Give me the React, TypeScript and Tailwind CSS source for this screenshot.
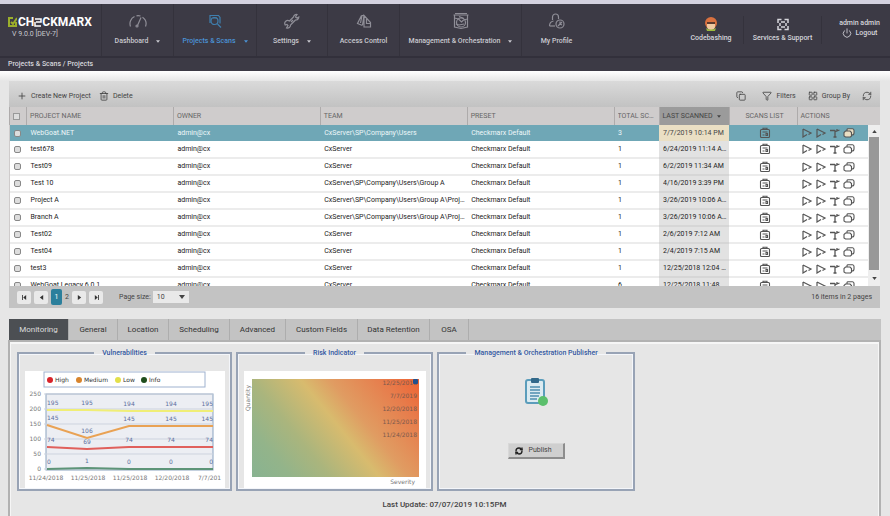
import { useState } from "react";
import type { ReactNode } from "react";
import { Copy, Filter, LayoutGrid, Plus, Power, RefreshCw, Trash2 } from "lucide-react";

interface Project {
  name: string;
  team: string;
  scans: number;
  scanned: string;
}

const projects: Project[] = [
  { name: "WebGoat.NET", team: "CxServer\\SP\\Company\\Users", scans: 3, scanned: "7/7/2019 10:14 PM" },
  { name: "test678", team: "CxServer", scans: 1, scanned: "6/24/2019 11:14 AM" },
  { name: "Test09", team: "CxServer", scans: 1, scanned: "6/2/2019 11:34 AM" },
  { name: "Test 10", team: "CxServer\\SP\\Company\\Users\\Group A", scans: 1, scanned: "4/16/2019 3:39 PM" },
  { name: "Project A", team: "CxServer\\SP\\Company\\Users\\Group A\\Project A", scans: 1, scanned: "3/26/2019 10:06 AM" },
  { name: "Branch A", team: "CxServer\\SP\\Company\\Users\\Group A\\Project A", scans: 1, scanned: "3/26/2019 10:06 AM" },
  { name: "Test02", team: "CxServer", scans: 1, scanned: "2/6/2019 7:12 AM" },
  { name: "Test04", team: "CxServer", scans: 1, scanned: "2/4/2019 7:15 AM" },
  { name: "test3", team: "CxServer", scans: 1, scanned: "12/25/2018 12:04 PM" },
  { name: "WebGoat Legacy 6.0.1", team: "CxServer", scans: 6, scanned: "12/25/2018 11:48 AM" },
];

const tabs = [
  { label: "Monitoring", width: "w-[60px]" },
  { label: "General", width: "w-[49px]" },
  { label: "Location", width: "w-[51px]" },
  { label: "Scheduling", width: "w-[61px]" },
  { label: "Advanced", width: "w-[56px]" },
  { label: "Custom Fields", width: "w-[72px]" },
  { label: "Data Retention", width: "w-[72px]" },
  { label: "OSA", width: "w-[39px]" },
];

function NavItem({ label, icon, width, menu, active }: { label: string; icon: ReactNode; width: string; menu?: boolean; active?: boolean }) {
  return (
    <a
      href="#"
      className={`flex shrink-0 flex-col items-center gap-1 border-l border-[#34323c] pt-[9px] ${width} ${
        active ? "text-[#4b93d6]" : "text-[#c9c9cf]"
      }`}
    >
      <span className={`flex h-4 items-center ${active ? "text-[#3f7fae]" : "text-[#8f8e97]"}`}>{icon}</span>
      <span className="flex h-4 items-center gap-1 whitespace-nowrap text-[7px] font-medium">
        {label}
        {menu && <Caret className="ml-1 h-[3px] w-1" />}
      </span>
    </a>
  );
}

function Caret({ className }: { className: string }) {
  return (
    <svg viewBox="0 0 6 4" className={className} fill="currentColor">
      <path d="M0 0h6L3 4z" />
    </svg>
  );
}

function GaugeIcon() {
  return (
    <svg viewBox="0 0 18 14" className="h-3.5 w-[18px]" fill="none" stroke="currentColor" strokeWidth="1.2">
      <path d="M1.500 12.500A8 8 0 0 1 5.500 2.500M7.500 1.800a8 8 0 0 1 4 .2M13.500 3.200a8 8 0 0 1 3 9.300M8.500 11.500 12 3.500" />
      <circle cx="8" cy="12" r="1" />
    </svg>
  );
}

function SearchCodeIcon() {
  return (
    <svg viewBox="0 0 16 16" className="h-4 w-4" fill="none" stroke="currentColor" strokeWidth="1.2">
      <path d="M3.500 2.500h8l1.500 2v6M3 2v8M6 5h4M10.500 11l3.500 3.500" />
      <circle cx="7.500" cy="8" r="3.500" />
    </svg>
  );
}

function ToolIcon() {
  return (
    <svg viewBox="0 0 16 16" className="h-4 w-4" fill="none" stroke="currentColor" strokeWidth="1.2">
      <path d="m5.500 8 4-4A3 3 0 0 1 13 1.500L11.500 4l1.500 1 1.800-1A3 3 0 0 1 11.500 7l-5 5A3 3 0 0 1 2.500 15L4 12.500 3 11.500 1.200 12A3 3 0 0 1 5.500 8zM7 9l2-2" />
    </svg>
  );
}

function AccessIcon() {
  return (
    <svg viewBox="0 0 16 16" className="h-4 w-4" fill="none" stroke="currentColor" strokeWidth="1.2">
      <path d="M5.500 2.500 1.500 10.500l5 2M6 2.500 4.500 10M8 2.500l6.500 7v4.500H8zM8 2.500 6.500 12M10.500 6v4.500h4M5.500 2.500H8" />
    </svg>
  );
}

function OrchestrationIcon() {
  return (
    <svg viewBox="0 0 18 18" className="h-[18px] w-[18px]" fill="none" stroke="currentColor" strokeWidth="1.2">
      <path d="M1.500 3h15M3 1.500h12M2.500 3v12l6.500 1.500 6.500-1.500V3M2.500 6l4 1 3 3 2-2 4-1M4 12l3 1 5-1M7 4.500l5 2" />
      <circle cx="9" cy="10.500" r="4.500" />
    </svg>
  );
}

function ProfileIcon() {
  return (
    <svg viewBox="0 0 18 16" className="h-4 w-[18px]" fill="none" stroke="currentColor" strokeWidth="1.2">
      <path d="M4.500 7V4a3 3 0 0 1 6 0v2M1.500 13c0-3 1-4.500 4-5" />
      <path d="M1.500 13H7" />
      <circle cx="12" cy="11" r="4" />
      <path d="M12 8.500V11l2 1M10 13l4-4" />
    </svg>
  );
}

function ScanIcon() {
  return (
    <svg viewBox="0 0 12 10" className="h-2.5 w-3" fill="none" stroke="currentColor" strokeWidth="1.200">
      <path d="M2 1v8l4-2.500M2 1l8 4-2.500 1.500" />
    </svg>
  );
}

function BranchIcon() {
  return (
    <svg viewBox="0 0 12 10" className="h-2.5 w-3" fill="none" stroke="currentColor" strokeWidth="1.300">
      <path d="M1 2.500h4.500l1 1L10.500 2M6 3v6M4.500 9h3M8 1v2" />
    </svg>
  );
}

function PagesIcon({ fill = "none" }: { fill?: string }) {
  return (
    <svg viewBox="0 0 12 10" className="h-2.5 w-3" fill={fill} stroke="currentColor" strokeWidth="1.100">
      <path d="M4 3V1.500A1 1 0 0 1 5 .8h4.500A1.700 1.700 0 0 1 11 2.500V5a2 2 0 0 1-2 2" />
      <path d="M2.500 3H7l1.500 1.500V8l-1 1h-5L1 8V4.500z" />
    </svg>
  );
}

function ListIcon() {
  return (
    <svg viewBox="0 0 12 12" className="inline h-3 w-3" fill="none" stroke="currentColor" strokeWidth="1.100">
      <rect x="1.500" y="2.500" width="9" height="8" rx="1" />
      <path d="M4 2.500V1.200h4v1.300M3.500 5h5M3.500 8h2M7 6.500h1.500v2H7z" />
    </svg>
  );
}

function PagerButton({ label, path }: { label: string; path: string }) {
  return (
    <button type="button" aria-label={label} className="flex h-[13px] w-[14px] items-center justify-center rounded-xs bg-[#e9e9e9] text-[#333]">
      <svg viewBox="0 0 8 6" className="h-[5px] w-[7px]" fill="currentColor">
        <path d={path} />
      </svg>
    </button>
  );
}

function Panel({ title, width, children }: { title: string; width: string; children: ReactNode }) {
  return (
    <fieldset className={`h-36 min-w-0 border-2 border-[#98a3b5] shadow-[inset_0_0_0_1px_#f4f6fa] ${width}`}>
      <legend className="mx-auto h-3 px-2 text-[7px] leading-3 font-medium whitespace-nowrap text-[#33589f]">{title}</legend>
      {children}
    </fieldset>
  );
}

const chartX = [22, 62, 104, 146, 188];
const series = [
  { name: "Low", color: "#f0ee76", y: [39, 39, 40, 40, 40], values: [195, 195, 194, 194, 195] },
  { name: "Medium", color: "#e9a254", y: [54, 67, 55, 55, 55], values: [145, 106, 145, 145, 145] },
  { name: "High", color: "#e0605c", y: [76, 78, 76, 76, 76], values: [74, 69, 74, 74, 74] },
  { name: "Info", color: "#5d9478", y: [98, 97, 98, 98, 98], values: [0, 1, 0, 0, 0] },
];
const legend = [
  { name: "High", color: "#d8232a", x: 24 },
  { name: "Medium", color: "#d8842c", x: 53 },
  { name: "Low", color: "#e3e04a", x: 92 },
  { name: "Info", color: "#1f4d1c", x: 118 },
];

function VulnerabilityChart() {
  return (
    <svg viewBox="0 0 200 117" className="h-[117px] w-[200px] bg-white font-['DejaVu_Sans',sans-serif]">
      <rect x="19" y="1" width="161" height="15" fill="#fff" stroke="#9fb2cf" />
      {legend.map((item) => (
        <g key={item.name}>
          <circle cx={item.x + 1} cy="9" r="3" fill={item.color} />
          <text x={item.x + 6} y="11" fontSize="6" fill="#333">{item.name}</text>
        </g>
      ))}
      <rect x="21" y="23" width="167" height="76" fill="#eceef3" stroke="#8ba3c0" />
      {[250, 200, 150, 100, 50, 0].map((value, i) => (
        <g key={value}>
          <path d={`M19 ${23 + i * 15}h169`} stroke="#cdd3de" />
          <text x="16" y={25 + i * 15} fontSize="6" textAnchor="end" fill="#777">{value}</text>
        </g>
      ))}
      {series.map((line) => (
        <g key={line.name}>
          <polyline
            points={chartX.map((x, i) => `${x},${line.y[i]}`).join(" ")}
            fill="none"
            stroke={line.color}
            strokeWidth="2"
          />
          {line.values.map((value, i) => (
            <text
              key={i}
              x={chartX[i]}
              y={line.y[i] - 5}
              fontSize="6"
              textAnchor={i === 0 ? "start" : i === 4 ? "end" : "middle"}
              fill="#5c6fa0"
            >
              {value}
            </text>
          ))}
        </g>
      ))}
      {["11/24/2018", "11/25/2018", "11/25/2018", "12/20/2018"].map((date, i) => (
        <text key={i} x={21 + i * 42} y="109" fontSize="6" textAnchor="middle" fill="#777">{date}</text>
      ))}
      <text x="173" y="109" fontSize="6" fill="#777">7/7/201</text>
    </svg>
  );
}

function RiskChart() {
  return (
    <svg viewBox="0 0 182 117" className="h-[117px] w-[182px] bg-white font-['DejaVu_Sans',sans-serif]">
      <defs>
        <linearGradient id="risk" gradientUnits="userSpaceOnUse" x1="8" y1="106" x2="156" y2="-14">
          <stop offset="0" stopColor="#88b391" />
          <stop offset="0.160" stopColor="#93b48a" />
          <stop offset="0.320" stopColor="#aab57d" />
          <stop offset="0.520" stopColor="#d8bb6e" />
          <stop offset="0.640" stopColor="#e09c62" />
          <stop offset="0.850" stopColor="#e77d4c" />
          <stop offset="1" stopColor="#ee6434" />
        </linearGradient>
      </defs>
      <rect x="8" y="8" width="167" height="98" fill="url(#risk)" />
      {["12/25/2018", "7/7/2019", "12/20/2018", "11/25/2018", "11/24/2018"].map((date, i) => (
        <text key={date} x="173" y={14 + i * 13} fontSize="6" textAnchor="end" fill="#7a5a4e">{date}</text>
      ))}
      <rect x="169" y="8" width="5" height="5" rx="1" fill="#23508c" />
      <text x="171" y="113" fontSize="6" textAnchor="end" fill="#777">Severity</text>
      <text transform="translate(6 40) rotate(-90)" fontSize="6" fill="#777">Quantity</text>
    </svg>
  );
}

export default function App() {
  const [tab, setTab] = useState("Monitoring");
  const [selected, setSelected] = useState(0);

  return (
    <div className="flex min-h-screen flex-col bg-[#e6e6e6] font-[Roboto,sans-serif] text-[7px] text-[#444]">
      {/* Header */}
      <header className="border-t-4 border-[#d3d1df] bg-[#3c3a45]">
        <div className="flex h-[54px] border-b-2 border-[#32303b]">
          <div className="w-[101px] shrink-0 pt-3 pl-2">
            <div className="flex items-center text-[12px] leading-3 font-bold text-white">
              <svg viewBox="0 0 9 10" className="mr-px h-2.5 w-[9px]" fill="none" stroke="#9aae2c" strokeWidth="2">
                <path d="M8 5v4H1V1h4M3 5l2 2 4-6" />
              </svg>
              <span>CH</span>
              <svg viewBox="0 0 8 9" className="h-[9px] w-2" fill="none" stroke="white" strokeWidth="1.500">
                <path d="M1 1h6v3H2M1 4v4h6" />
              </svg>
              <span>CKMARX</span>
            </div>
            <div className="pl-1 text-[7px] leading-3 text-[#c9c9cf]">V 9.0.0 [DEV-7]</div>
          </div>
          <nav className="flex min-w-0 flex-1">
            <NavItem label="Dashboard" icon={<GaugeIcon />} width="w-[72px]" menu />
            <NavItem label="Projects & Scans" icon={<SearchCodeIcon />} width="w-[83px]" menu active />
            <NavItem label="Settings" icon={<ToolIcon />} width="w-[71px]" menu />
            <NavItem label="Access Control" icon={<AccessIcon />} width="w-[72px]" />
            <NavItem label="Management & Orchestration" icon={<OrchestrationIcon />} width="w-[122px]" menu />
            <NavItem label="My Profile" icon={<ProfileIcon />} width="w-[70px]" />
          </nav>
          <div className="flex shrink-0 items-center font-medium text-[#d6d6dc]">
            <a href="#" className="flex w-[64px] flex-col items-center gap-px">
              <svg viewBox="0 0 14 16" className="h-4 w-3.5">
                <circle cx="7" cy="7" r="6" fill="#d9713f" />
                <path d="M3 6h8v4a4 4 0 0 1-8 0z" fill="#f0c9a0" />
                <path d="M3 6h8v2H3z" fill="#5b3a2e" />
                <path d="M2 12c3 2 7 2 10 0l-1 3H3z" fill="#9dbb3c" />
              </svg>
              <span>Codebashing</span>
            </a>
            <a href="#" className="flex w-[79px] flex-col items-center gap-px border-x border-[#34323c]">
              <svg viewBox="0 0 14 16" className="h-4 w-3.5" fill="none" stroke="currentColor" strokeWidth="1.500">
                <path d="M2 7V3.500h3.500M8.500 3.500H12V7M2 10v3.500h3.500M8.500 13.500H12V10M5 6h4M5 11h4M4 7v3M10 7v3" />
              </svg>
              <span className="whitespace-nowrap">Services &amp; Support</span>
            </a>
            <div className="flex w-[68px] flex-col items-center pr-px pb-1 pl-2">
              <span>admin admin</span>
              <button type="button" className="flex items-center gap-1">
                <Power className="h-2.5 w-2.5" /> Logout
              </button>
            </div>
          </div>
        </div>
        <div className="flex h-[13px] items-center px-2 font-medium text-[#d6d6dc]">Projects &amp; Scans / Projects</div>
      </header>
      <div className="h-2.5 shrink-0 bg-linear-to-b from-white to-[#e6e6e6]" />

      {/* Projects grid */}
      <section className="mx-[9px] pr-px">
        <div className="flex h-[26px] items-center bg-linear-to-b from-[#dadada] to-[#c2c2c2] pt-1 pr-2 pl-2">
          <button type="button" className="flex items-center gap-1">
            <Plus className="h-2.5 w-2.5" /> Create New Project
          </button>
          <button type="button" className="ml-2 flex items-center gap-1">
            <Trash2 className="h-2.5 w-2.5" /> Delete
          </button>
          <div className="ml-auto flex items-center">
            <button type="button" aria-label="Export" className="mr-4">
              <Copy className="h-2.5 w-2.5" />
            </button>
            <button type="button" className="mr-3 flex items-center gap-1">
              <Filter className="h-2.5 w-2.5" /> Filters
            </button>
            <button type="button" className="mr-3 flex items-center gap-1">
              <LayoutGrid className="h-2.5 w-2.5" /> Group By
            </button>
            <button type="button" aria-label="Refresh">
              <RefreshCw className="h-2.5 w-2.5" />
            </button>
          </div>
        </div>

        <div className="flex h-[179px] overflow-hidden bg-[#cfcccc]">
          <div className="min-w-0 flex-1">
            <table className="w-full table-fixed border-collapse text-left">
              <colgroup>
                <col className="w-[17px]" />
                <col />
                <col />
                <col />
                <col />
                <col className="w-[45px]" />
                <col className="w-[70px]" />
                <col className="w-[68px]" />
                <col className="w-[71px]" />
              </colgroup>
              <thead>
                <tr className="h-[18px] text-[#666] [&>th]:border-l [&>th]:border-[#aeabab] [&>th]:p-0 [&>th]:pl-[3px] [&>th]:font-normal [&>th]:whitespace-nowrap">
                  <th>
                    <input type="checkbox" aria-label="Select all" className="block h-[7px] w-[7px] appearance-none border border-[#999] bg-[#ddd]" />
                  </th>
                  <th>PROJECT NAME</th>
                  <th>OWNER</th>
                  <th>TEAM</th>
                  <th>PRESET</th>
                  <th>
                    <div className="truncate pr-1">TOTAL SCANS</div>
                  </th>
                  <th className="bg-[#9b9b9b] text-[#444]">
                    <button type="button" className="flex items-center gap-1">
                      LAST SCANNED <Caret className="h-[3px] w-1" />
                    </button>
                  </th>
                  <th className="text-center">SCANS LIST</th>
                  <th>ACTIONS</th>
                </tr>
              </thead>
              <tbody>
                {projects.map((p, i) => (
                  <tr
                    key={p.name}
                    onClick={() => setSelected(i)}
                    className={`[&>td]:p-0 [&>td]:pl-1 [&>td]:whitespace-nowrap ${
                      i === selected
                        ? "h-4 bg-[#6fa7b6] text-[#eef7f9]"
                        : "h-[17px] border-b-2 border-[#ececec] bg-white text-[#222]"
                    }`}
                  >
                    <td>
                      <input type="checkbox" aria-label={`Select ${p.name}`} className="block h-[7px] w-[7px] appearance-none rounded-xs border border-[#888] bg-[#ddd]" />
                    </td>
                    <td>{p.name}</td>
                    <td>admin@cx</td>
                    <td>
                      <div className="truncate pr-0.5">{p.team}</div>
                    </td>
                    <td>Checkmarx Default</td>
                    <td>{p.scans}</td>
                    <td className={i === selected ? "bg-[#eadfc4] text-[#444]" : "border-b-2 border-[#d6d6d6] bg-[#e2e2e2]"}>
                      <div className="truncate pr-0.5">{p.scanned}</div>
                    </td>
                    <td className="text-center text-[#555]">
                      <button type="button" aria-label="Scans list" className="block w-full">
                        <ListIcon />
                      </button>
                    </td>
                    <td className="text-[#555]">
                      <div className="flex items-center gap-0.5">
                        <button type="button" aria-label="Full scan"><ScanIcon /></button>
                        <button type="button" aria-label="Incremental scan"><ScanIcon /></button>
                        <button type="button" aria-label="Branch"><BranchIcon /></button>
                        <button type="button" aria-label="Duplicate"><PagesIcon fill={i === selected ? "#eadfc4" : "none"} /></button>
                      </div>
                    </td>
                  </tr>
                ))}
              </tbody>
            </table>
          </div>
          {/* Scrollbar */}
          <div className="flex w-3 flex-col pt-[18px]">
            <button type="button" aria-label="Scroll up" className="flex h-3 items-center justify-center bg-[#eee]">
              <Caret className="h-[3px] w-[5px] rotate-180" />
            </button>
            <div className="flex-1 bg-[#eee] px-px">
              <div className="h-full bg-[#989898]" />
            </div>
            <button type="button" aria-label="Scroll down" className="flex h-4 items-center justify-center bg-[#eee]">
              <Caret className="h-[3px] w-[5px]" />
            </button>
          </div>
        </div>

        {/* Pager */}
        <div className="flex h-[22px] items-center bg-[#c3c3c3] px-2">
          <div className="flex items-center gap-[3px]">
            <PagerButton label="First page" path="M1 0h1v6H1zM6 0v6L2.500 3z" />
            <PagerButton label="Previous page" path="M6 0v6L2 3z" />
            <button type="button" className="h-4 w-[11px] rounded-xs bg-[#2b7f9c] text-white">1</button>
            <button type="button" className="w-1">2</button>
            <PagerButton label="Next page" path="M2 0v6l4-3z" />
            <PagerButton label="Last page" path="M6 0h1v6H6zM2 0v6l3.500-3z" />
          </div>
          <label htmlFor="page-size" className="ml-4">Page size:</label>
          <div className="relative ml-0.5">
            <select id="page-size" defaultValue="10" className="h-3 w-9 appearance-none bg-[#e9e9e9] pl-1 text-[7px]">
              <option>10</option>
              <option>20</option>
            </select>
            <Caret className="pointer-events-none absolute top-1 right-1 h-1 w-1.5" />
          </div>
          <span className="ml-auto">16 items in 2 pages</span>
        </div>
      </section>

      {/* Details */}
      <section className="mx-2 mt-[11px] flex flex-1 flex-col pr-px">
        <div className="flex h-[21px] border-l border-[#e6e6e6] bg-[#c3c3c3]">
          {tabs.map((t) => (
            <button
              key={t.label}
              type="button"
              onClick={() => setTab(t.label)}
              className={`border-r border-[#adadad] text-[8px] ${t.width} ${
                tab === t.label ? "bg-[#4c4f53] text-[#ddd]" : "text-[#333]"
              }`}
            >
              {t.label}
            </button>
          ))}
        </div>
        <div className="flex-1 border-2 border-b-0 border-[#b2b2b2] px-[7px] pt-[5px] shadow-[inset_0_1px_0_1px_#f6f6f6]">
          <div className="flex gap-1">
            <Panel title="Vulnerabilities" width="w-[215px]">
              <div className="flex justify-center pt-3">
                <VulnerabilityChart />
              </div>
            </Panel>
            <Panel title="Risk Indicator" width="w-[197px]">
              <div className="flex justify-center pt-3">
                <RiskChart />
              </div>
            </Panel>
            <Panel title="Management & Orchestration Publisher" width="w-[198px]">
              <div className="flex flex-col items-center pt-[18px]">
                <svg viewBox="0 0 24 30" className="h-[30px] w-6">
                  <rect x="2" y="3" width="18" height="23" rx="2" fill="#dcebf1" stroke="#5b9dbb" strokeWidth="2" />
                  <rect x="7" y="1" width="8" height="5" rx="1" fill="#33698a" />
                  <path d="M6 10h10M6 13h10M6 16h10M6 19h9M6 22h7" stroke="#4f8fae" strokeWidth="1.500" />
                  <circle cx="19" cy="24" r="5" fill="#5bbf6c" />
                </svg>
                <button
                  type="button"
                  className="mt-9 flex h-4 w-[57px] items-center gap-1.5 border border-r-2 border-b-2 border-[#d8d8d8] border-r-[#8d8d8d] border-b-[#8d8d8d] bg-[#cfcfcf] pl-1.5"
                >
                  <RefreshCw className="h-2 w-2 text-[#222]" strokeWidth={4} /> Publish
                </button>
              </div>
            </Panel>
          </div>
          <p className="pt-2 text-center text-[8px] leading-3 font-medium">Last Update: 07/07/2019 10:15PM</p>
        </div>
      </section>
    </div>
  );
}
